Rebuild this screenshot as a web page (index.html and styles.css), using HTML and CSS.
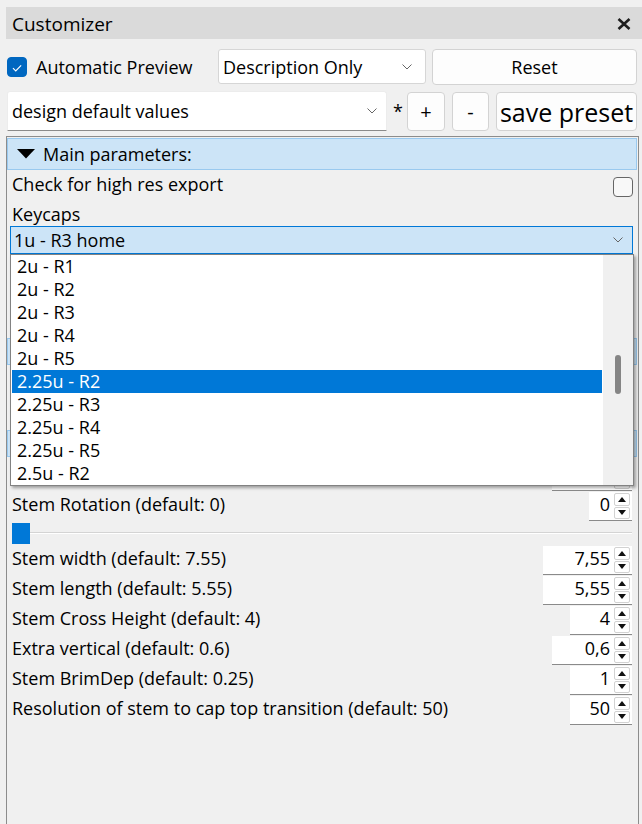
FILE: index.html
```html
<!DOCTYPE html>
<html lang="en">
<head>
<meta charset="utf-8">
<title>Customizer</title>
<link rel="stylesheet" href="styles.css">
</head>
<body>
<div class="dock">
  <div class="titlebar">
    <span class="title">Customizer</span>
    <span class="close"><svg width="14" height="12" viewBox="0 0 14 12"><path d="M1.5 1 L12.5 11 M12.5 1 L1.5 11" stroke="#1e1e1e" stroke-width="2.6" fill="none"/></svg></span>
  </div>

  <div class="toolbar row1">
    <label class="autoprev">
      <span class="cb checked"><svg width="20" height="20" viewBox="0 0 20 20"><path d="M5.5 10.2 L8.6 13.2 L14.6 7" stroke="#fff" stroke-width="1.3" fill="none"/></svg></span>
      <span>Automatic Preview</span>
    </label>
    <div class="combo desc"><span>Description Only</span><svg class="chev" width="10" height="6" viewBox="0 0 10 6"><path d="M0.5 0.5 L5 5 L9.5 0.5" stroke="#666" stroke-width="1" fill="none"/></svg></div>
    <button class="btn reset">Reset</button>
  </div>

  <div class="toolbar row2">
    <div class="combo preset"><span>design default values</span><svg class="chev" width="10" height="6" viewBox="0 0 10 6"><path d="M0.5 0.5 L5 5 L9.5 0.5" stroke="#666" stroke-width="1" fill="none"/></svg></div>
    <span class="star">*</span>
    <button class="btn sq">+</button>
    <button class="btn sq minus">-</button>
    <button class="btn save">save preset</button>
  </div>

  <div class="scrollarea">
    <div class="section-header">
      <svg width="18" height="10" viewBox="0 0 18 10"><polygon points="0,0 18,0 9,9.5" fill="#000"/></svg>
      <span>Main parameters:</span>
    </div>

    <div class="param check-row">
      <span class="lbl">Check for high res export</span>
      <span class="cb"></span>
    </div>

    <div class="param label-row"><span class="lbl">Keycaps</span></div>

    <div class="dropdown">
      <div class="combo keycaps"><span>1u - R3 home</span><svg class="chev" width="10" height="6" viewBox="0 0 10 6"><path d="M0.5 0.5 L5 5 L9.5 0.5" stroke="#666" stroke-width="1" fill="none"/></svg></div>
      <div class="popup">
        <ul class="list">
          <li>2u - R1</li>
          <li>2u - R2</li>
          <li>2u - R3</li>
          <li>2u - R4</li>
          <li>2u - R5</li>
          <li class="selected">2.25u - R2</li>
          <li>2.25u - R3</li>
          <li>2.25u - R4</li>
          <li>2.25u - R5</li>
          <li>2.5u - R2</li>
        </ul>
        <div class="vscroll"><div class="thumb"></div></div>
      </div>
    </div>

    <div class="covered">
      <div class="param spin-row">
        <span class="lbl">Keycap profile (default: 0)</span>
        <div class="spin w43"><span class="val">0</span><span class="arrows"><span class="arr up"></span><span class="arr down"></span></span></div>
      </div>
      <div class="param spin-row">
        <span class="lbl">Wall thickness (default: 1.2)</span>
        <div class="spin w80"><span class="val">1,2</span><span class="arrows"><span class="arr up"></span><span class="arr down"></span></span></div>
      </div>
      <div class="slider"><div class="handle"></div></div>

      <div class="section-header collapsed">
        <svg width="10" height="18" viewBox="0 0 10 18"><polygon points="0,0 9.5,9 0,18" fill="#000"/></svg>
        <span class="lbl">Legend parameters:</span>
      </div>
      <div class="param spin-row">
        <span class="lbl">Legend size (default: 4)</span>
        <div class="spin w62"><span class="val">4</span><span class="arrows"><span class="arr up"></span><span class="arr down"></span></span></div>
      </div>
      <div class="param spin-row">
        <span class="lbl">Legend depth (default: 1)</span>
        <div class="spin w62"><span class="val">1</span><span class="arrows"><span class="arr up"></span><span class="arr down"></span></span></div>
      </div>
      <div class="section-header collapsed spaced">
        <svg width="10" height="18" viewBox="0 0 10 18"><polygon points="0,0 9.5,9 0,18" fill="#000"/></svg>
        <span class="lbl">Stem parameters:</span>
      </div>
      <div class="param spin-row spaced">
        <span class="lbl">Stem Tolerance (default: 0.1)</span>
        <div class="spin w80"><span class="val">0,1</span><span class="arrows"><span class="arr up"></span><span class="arr down"></span></span></div>
      </div>
    </div>

    <div class="param spin-row">
      <span class="lbl">Stem Rotation (default: 0)</span>
      <div class="spin w43"><span class="val">0</span><span class="arrows"><span class="arr up"></span><span class="arr down"></span></span></div>
    </div>
    <div class="slider"><div class="handle"></div></div>
    <div class="param spin-row">
      <span class="lbl">Stem width (default: 7.55)</span>
      <div class="spin w89"><span class="val">7,55</span><span class="arrows"><span class="arr up"></span><span class="arr down"></span></span></div>
    </div>
    <div class="param spin-row">
      <span class="lbl">Stem length (default: 5.55)</span>
      <div class="spin w89"><span class="val">5,55</span><span class="arrows"><span class="arr up"></span><span class="arr down"></span></span></div>
    </div>
    <div class="param spin-row">
      <span class="lbl">Stem Cross Height (default: 4)</span>
      <div class="spin w62"><span class="val">4</span><span class="arrows"><span class="arr up"></span><span class="arr down"></span></span></div>
    </div>
    <div class="param spin-row">
      <span class="lbl">Extra vertical (default: 0.6)</span>
      <div class="spin w80"><span class="val">0,6</span><span class="arrows"><span class="arr up"></span><span class="arr down"></span></span></div>
    </div>
    <div class="param spin-row">
      <span class="lbl">Stem BrimDep (default: 0.25)</span>
      <div class="spin w62"><span class="val">1</span><span class="arrows"><span class="arr up"></span><span class="arr down"></span></span></div>
    </div>
    <div class="param spin-row">
      <span class="lbl">Resolution of stem to cap top transition (default: 50)</span>
      <div class="spin w62"><span class="val">50</span><span class="arrows"><span class="arr up"></span><span class="arr down"></span></span></div>
    </div>
  </div>
</div>
</body>
</html>
```
FILE: styles.css
```css
* { box-sizing: border-box; }
html, body { margin: 0; padding: 0; }
body {
  background: #f0f0f0;
  font-family: "Open Sans", "Noto Sans", sans-serif;
  font-size: 18px;
  color: #000;
}
.dock {
  display: flex;
  flex-direction: column;
  height: 100vh;
  overflow: hidden;
}
.titlebar {
  margin: 7px 0 0 6px;
  height: 32px;
  background: #dadada;
  display: flex;
  align-items: center;
  justify-content: space-between;
  padding: 1px 11px 0 6px;
}
.title { font-size: 19px; line-height: 24px; }
.close { display: flex; }

.toolbar { display: flex; margin: 0 5px 0 7px; }
.row1 { margin-top: 10px; height: 35px; align-items: center; gap: 6px; }
.row2 { margin-top: 7px; height: 40px; align-items: center; gap: 6px; }

.autoprev { width: 205px; display: flex; align-items: center; gap: 9px; line-height: 24px; }
.cb {
  width: 20px; height: 20px;
  border: 1px solid #666;
  border-radius: 4px;
  background: #f8f8f8;
  display: block;
  flex: none;
}
.cb.checked { background: #0067c0; border-color: #0067c0; display: flex; }

.combo {
  display: flex;
  align-items: center;
  justify-content: space-between;
  background: #fff;
  border: 1px solid #d6d6d6;
  border-radius: 3px;
  line-height: 24px;
  white-space: nowrap;
}
.combo.desc { width: 208px; height: 35px; padding: 0 13px 0 4px; }
.combo.preset { width: 380px; height: 40px; padding: 0 9px 0 4px; border-color: #ececec; border-bottom-color: #8a8a8a; border-radius: 3px 3px 0 0; }
.chev { display: block; flex: none; }

.btn {
  font: inherit;
  color: #000;
  background: #fdfdfd;
  border: 1px solid #d3d3d3;
  border-radius: 4px;
  padding: 0;
  line-height: 24px;
}
.reset { flex: 1; height: 36px; }
.star { width: 8px; line-height: 24px; }
.sq { width: 38px; height: 39px; margin-top: 1px; font-size: 20px; }
.minus { width: 37px; margin-left: 1px; }
.save { flex: 1; height: 39px; margin-top: 1px; margin-left: 1px; font-size: 25px; line-height: 30px; }

.scrollarea {
  flex: 1;
  margin: 5px 3px 0 6px;
  border: 1px solid #8c8c8c;
  border-bottom: 0;
  padding-top: 1px;
}
.section-header {
  height: 32px;
  margin-right: 1px;
  background: #cce4f7;
  border: 1px solid #99c9ef;
  display: flex;
  align-items: center;
  padding-left: 9px;
  gap: 8px;
  line-height: 24px;
}
.section-header.collapsed { height: 27px; padding-left: 13px; gap: 12px; }
.section-header.spaced { margin-top: 5px; }

.param { display: flex; justify-content: space-between; padding: 0 6px 0 5px; }
.lbl { line-height: 24px; white-space: nowrap; }
.check-row { height: 28px; align-items: center; }
.check-row .cb { align-self: flex-end; margin-bottom: 1px; margin-right: -1px; }
.label-row { height: 28px; align-items: flex-end; }
.spin-row { height: 30px; align-items: baseline; }
.spin-row.spaced { margin-top: 5px; }

/* rows lying under the open list: only their frames show at the edges */
.covered .lbl,
.covered .val { visibility: hidden; }

.spin {
  display: flex;
  height: 29px;
  background: #fff;
  border-bottom: 1px solid #8a8a8a;
}
.w43 { width: 43px; }
.w62 { width: 62px; }
.w80 { width: 80px; }
.w89 { width: 89px; }
.val { flex: 1; text-align: right; padding-right: 3px; line-height: 24px; }
.arrows {
  width: 19px;
  display: flex;
  flex-direction: column;
  gap: 1px;
  padding: 1px 2px 1px 1px;
}
.arr {
  flex: 1;
  border: 1px solid #d2d2d2;
  border-radius: 2px;
  display: flex;
  align-items: center;
  justify-content: center;
}
.arr.up::after {
  content: "";
  border-left: 4px solid transparent;
  border-right: 4px solid transparent;
  border-bottom: 5px solid #111;
}
.arr.down::after {
  content: "";
  border-left: 4px solid transparent;
  border-right: 4px solid transparent;
  border-top: 5px solid #111;
}

.slider {
  height: 24px;
  margin: 0 6px 0 5px;
  display: flex;
  align-items: flex-start;
  background: linear-gradient(to bottom, transparent 10px, #d4d4d4 10px, #d4d4d4 11px, #fff 11px, #fff 12px, transparent 12px);
}
.handle { width: 18px; height: 21px; margin-top: 1px; background: #0078d7; }

.dropdown { position: relative; margin: 0 5px 0 3px; }
.combo.keycaps {
  height: 28px;
  background: #cce4f7;
  border: 1px solid #0078d7;
  border-radius: 0;
  padding: 0 9px 0 3px;
}
.popup {
  position: absolute;
  top: 100%;
  left: 0;
  width: 624px;
  height: 232px;
  background: #fff;
  border: 1px solid #828282;
  box-shadow: 2px 2px 3px rgba(0, 0, 0, 0.35);
  display: flex;
  z-index: 5;
}
.list { list-style: none; margin: 0; padding: 0; flex: 1; }
.list li {
  height: 23px;
  line-height: 23px;
  padding-left: 5px;
  margin: 0 1px;
  white-space: nowrap;
}
.list li.selected { background: #0078d7; color: #fff; }
.vscroll { width: 30px; background: #f0f0f0; padding: 100px 0 0 12px; }
.thumb { width: 6px; height: 39px; background: #858585; border-radius: 3px; }
```
